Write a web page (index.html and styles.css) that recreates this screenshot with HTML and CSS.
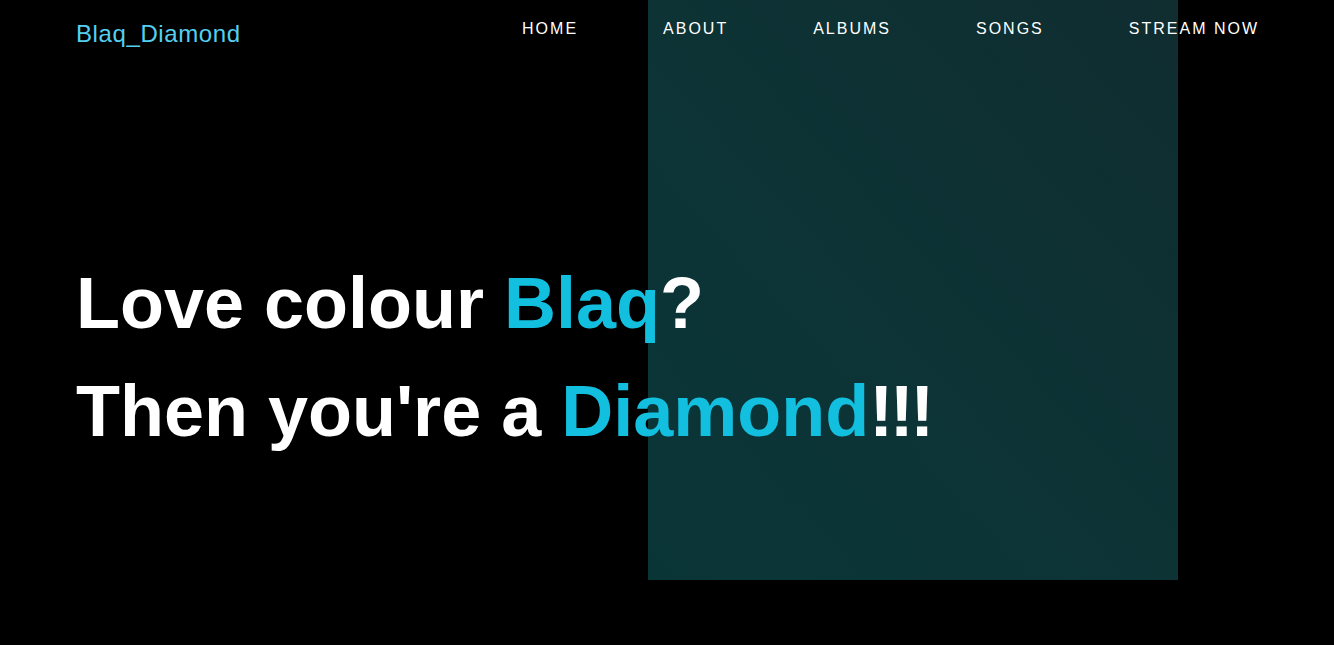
FILE: index.html
```html
<!DOCTYPE html>
<html lang="en">
<head>
<meta charset="utf-8">
<title>Blaq_Diamond</title>
<link rel="stylesheet" href="styles.css">
</head>
<body>
<section class="hero">
  <div class="hero-art" aria-hidden="true"></div>
  <header class="topbar">
    <a class="logo" href="#">Blaq_Diamond</a>
    <nav class="menu">
      <a href="#">HOME</a>
      <a href="#">ABOUT</a>
      <a href="#">ALBUMS</a>
      <a href="#">SONGS</a>
      <a href="#">STREAM NOW</a>
    </nav>
  </header>
  <div class="headline">
    <h1>Love colour <span class="accent">Blaq</span>?</h1>
    <h1>Then you're a <span class="accent">Diamond</span><span class="bang">!!!</span></h1>
  </div>
</section>
<section class="more"></section>
</body>
</html>
```
FILE: styles.css
```css
html, body {
  margin: 0;
  padding: 0;
  background: #000;
}
body {
  font-family: "Liberation Sans", Arial, sans-serif;
  color: #fff;
}
.hero {
  position: relative;
  height: 645px;
}
.hero-art {
  position: absolute;
  left: 648px;
  top: 0;
  width: 530px;
  height: 580px;
  background: linear-gradient(to bottom left, #102d30 0%, #0d3335 50%, #0a3537 100%);
}
.topbar {
  position: relative;
  display: flex;
  justify-content: space-between;
  align-items: flex-start;
  padding: 18px 75px 0 76px;
}
.logo {
  color: #55cff0;
  font-size: 24px;
  text-decoration: none;
  letter-spacing: 0.6px;
  margin-top: 2px;
}
.menu {
  display: flex;
  gap: 85px;
  margin-top: 2px;
}
.menu a {
  color: #fff;
  font-size: 16px;
  letter-spacing: 2px;
  text-decoration: none;
}
.headline {
  position: relative;
  padding: 201px 0 0 76px;
}
.headline h1 {
  margin: 0;
  font-size: 72px;
  line-height: 108px;
  font-weight: bold;
}
.accent {
  color: #12bfdf;
}
.bang {
  letter-spacing: -3.5px;
}
.more {
  height: 5600px;
}
```
